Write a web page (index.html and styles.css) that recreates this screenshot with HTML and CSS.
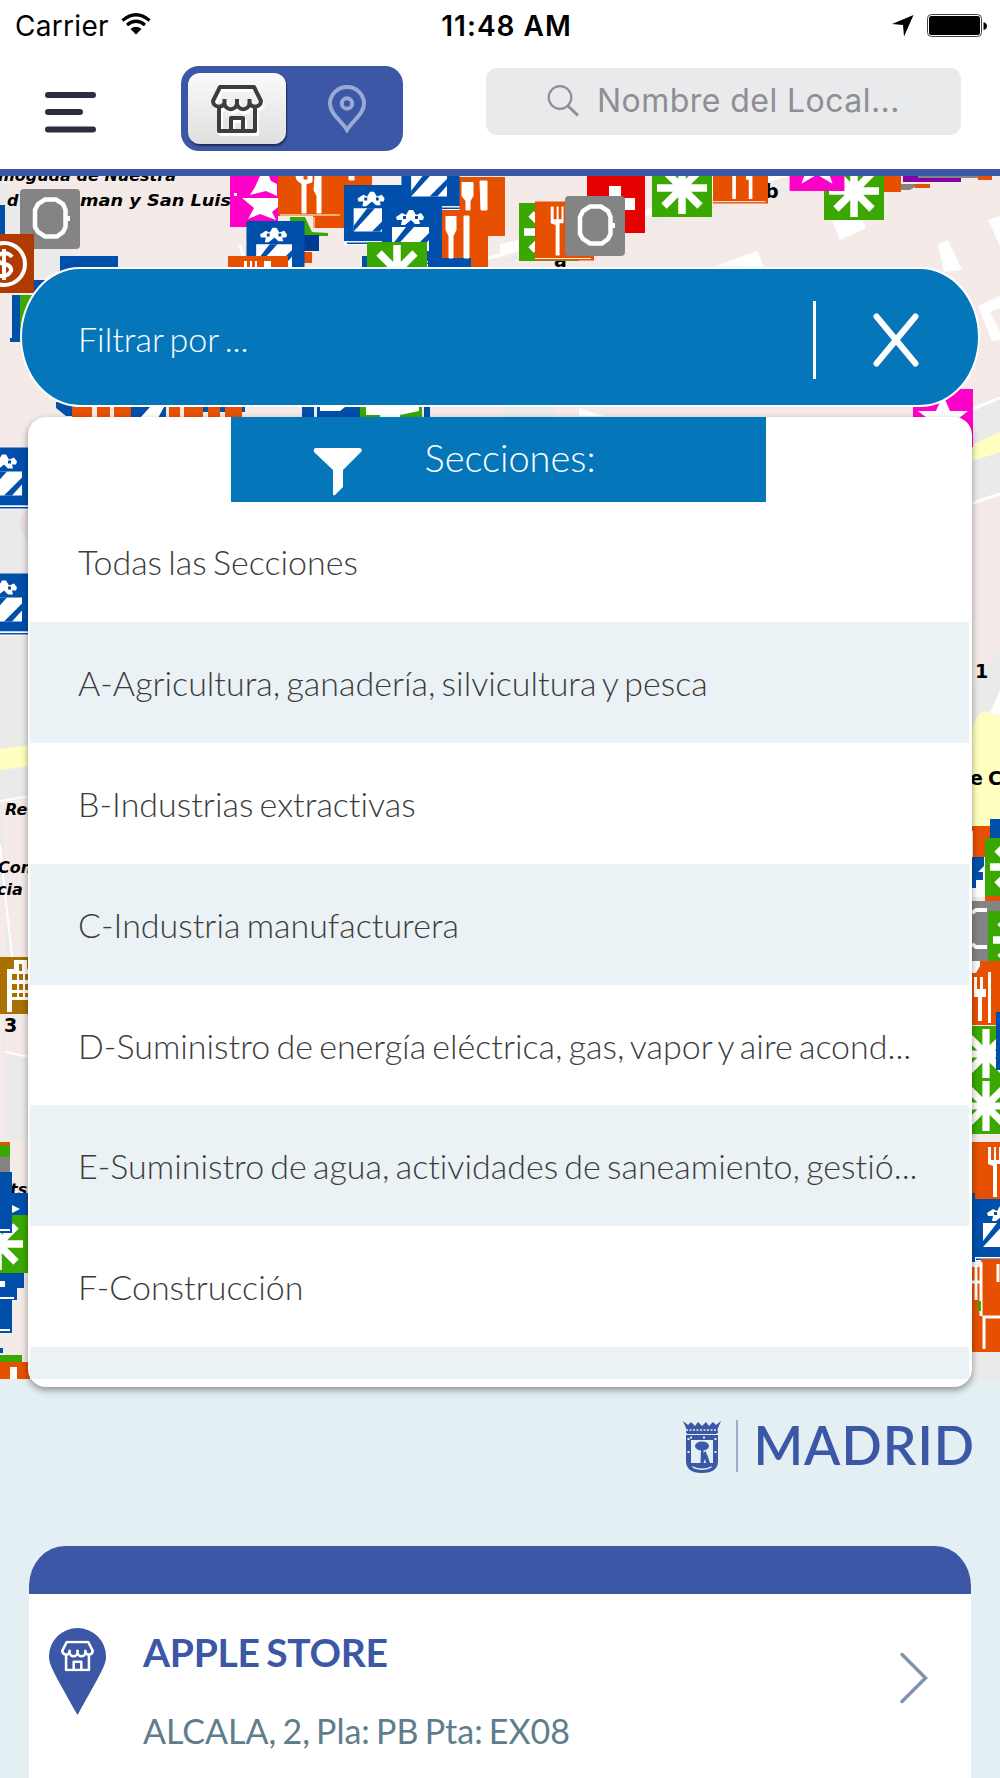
FILE: index.html
```html
<!DOCTYPE html>
<html lang="es">
<head>
    <meta charset="UTF-8">
    <meta name="viewport" content="width=device-width, initial-scale=1.0">
    <title>Locales de Madrid</title>
    <link rel="stylesheet" href="styles.css">
</head>
<body>
    <!-- Shared icons -->
    <svg class="defs" width="0" height="0">
        <symbol id="store" viewBox="0 0 52 48">
            <path d="M9 2H43L50 16A6 6 0 0 1 38.500 18A6 6 0 0 1 26 18A6 6 0 0 1 13.500 18A6 6 0 0 1 2 16ZM13.500 18V14M26 18V14M38.500 18V14M8 23V46H44V23M20 46V33H32V46" fill="none" stroke="currentColor" stroke-width="4" stroke-linejoin="round"/>
        </symbol>
        <symbol id="gift" viewBox="0 0 60 62">
            <path d="M0 0H60V58H0Z" fill="#004fab"/>
            <path d="M0 58H60V62H0Z" fill="#fff"/>
            <path d="M3 59.500H60V61H3Z" fill="#004fab"/>
            <path d="M10 24H47V48H10Z" fill="#fff"/>
            <path d="M10 42L24 24H32L10 48ZM29 48L47 30V37L37 48Z" fill="#004fab"/>
            <path d="M14 14L20 10L24 12L27 7H31L34 12L39 10L42 14L41 17H37L38 21H33L29 17L23 22H19L20 17H15Z" fill="#fff"/>
            <path d="M21 13H24V16H21ZM33 13H36V16H33Z" fill="#004fab"/>
        </symbol>
        <symbol id="star" viewBox="0 0 60 58">
            <path d="M0 0H60V58H0Z" fill="#ff00c8"/>
            <path d="M30 6L37 22H55L41 33L47 50L30 40L13 50L19 33L5 22H23Z" fill="#fff"/>
        </symbol>
        <symbol id="food" viewBox="0 0 60 60">
            <path d="M0 0H60V60H0Z" fill="#e65000"/>
            <path d="M16 5H19V18H22V5H24V18H27V5H29V22H25V55H21V24L16 22ZM36 5H43V55H39V34H36Z" fill="#fff"/>
            <path d="M0 58H57" stroke="#fff" stroke-width="1"/>
        </symbol>
        <symbol id="plant" viewBox="0 0 60 58">
            <path d="M0 0H60V58H0Z" fill="#3aa800"/>
            <path d="M30 3V55M5 29H55M12 11L48 47M48 11L12 47" stroke="#fff" stroke-width="7.500"/>
        </symbol>
        <symbol id="zero" viewBox="0 0 60 60">
            <rect width="60" height="60" rx="4" fill="#848484"/>
            <path d="M25 10.500H36L43 15L45.500 21V38L43 43L37 47.500H25L18 43L15 38V21L18 15Z" fill="none" stroke="#fff" stroke-width="4.500"/>
            <path d="M46 27H50V32H46Z" fill="#fff"/>
        </symbol>
    </svg>

    <div class="status-bar">
        <div class="carrier">
            <span>Carrier</span>
            <svg width="30" height="22" viewBox="0 0 30 22">
                <path d="M1.500 7.500Q15 -4 28.500 7.500M6 12Q15 4.500 24 12" fill="none" stroke="#000" stroke-width="3.200"/>
                <path d="M9.500 16Q15 11.500 20.500 16L15 21.500Z"/>
            </svg>
        </div>
        <span class="time">11:48 AM</span>
        <div class="battery">
            <svg width="96" height="24" viewBox="0 0 96 24">
                <path d="M0 10L21.500 1L12 22.500L11 11Z"/>
                <rect x="35.500" y=".5" width="54" height="22" rx="4" fill="#fff" stroke="#444"/>
                <rect x="37" y="2" width="51" height="19" rx="2.500"/>
                <path d="M91.500 8Q95 9 95 12T91.500 16Z"/>
            </svg>
        </div>
    </div>

    <header class="toolbar">
        <svg class="menu" width="51" height="42" viewBox="0 0 51 42">
            <path d="M3 4H48M3 21H35M3 38.500H48" stroke="#2a2e40" stroke-width="6" stroke-linecap="round"/>
        </svg>
        <div class="switch">
            <div class="switch-on"><svg width="52" height="48"><use href="#store"/></svg></div>
            <div class="switch-off">
                <svg width="38" height="48" viewBox="0 0 38 48">
                    <path d="M19 45C13 35 2 29 2 18.500A17 16.500 0 0 1 36 18.500C36 29 25 35 19 45Z" fill="none" stroke="#9caad3" stroke-width="4"/>
                    <circle cx="19" cy="18.500" r="5.200" fill="none" stroke="#9caad3" stroke-width="4"/>
                </svg>
            </div>
        </div>
        <div class="search">
            <svg width="33" height="33" viewBox="0 0 33 33">
                <path d="M20 20L31 30.500" stroke="#8e8e93" stroke-width="3"/>
                <circle cx="13" cy="12.500" r="11.300" fill="none" stroke="#8e8e93" stroke-width="2.200"/>
            </svg>
            <span>Nombre del Local...</span>
        </div>
    </header>

    <main class="map">
        <svg class="map-tiles" width="1000" height="1203" viewBox="0 176 1000 1203">
            <!-- Streets -->
            <path d="M0 176H1000V1379H0Z" fill="#f4eae8"/>
            <path d="M0 180L60 240L80 262L34 280L0 240ZM0 505H30V797L0 802ZM0 802L5 860L12 955H4V1140H28V1060L6 1052V900L0 880Z" fill="#eaeaea"/>
            <path d="M0 749L30 745V766L0 770Z" fill="#ffffc0"/>
            <path d="M0 801L30 796M0 845L12 957M5 1052L30 1057" fill="none" stroke="#fff" stroke-width="2"/>
            <path d="M500 256L640 218L790 176H700L640 214L500 244Z" fill="#fff"/>
            <path d="M500 262L640 224L840 176" stroke="#eaeaea" stroke-width="4" fill="none"/>
            <path d="M832 220L860 212L866 228L840 240ZM938 244L948 240L962 270L944 272ZM988 220L1000 216V246ZM716 266L757 251L764 267ZM978 306L1000 296V340L992 341ZM579 408L604 416H579Z" fill="#fff"/>
            <path d="M990 312L1000 308V332Z" fill="#f4eae8"/>
            <path d="M505 406H552L555 418H505ZM970 409L1000 397V495L970 505ZM970 690L1000 650V715L970 750Z" fill="#eaeaea"/>
            <path d="M970 410L1000 398M970 504L1000 494M240 245L246 265M480 260L505 254" stroke="#fff" stroke-width="3"/>
            <path d="M970 446L1000 432V452L970 462ZM972 728Q980 706 990 713L1000 717V830H972Z" fill="#ffffc0"/>
            <path d="M990 713L1000 690V716Z" fill="#fff"/>
            <path d="M28 510Q12 524 28 540Z" fill="#eadfdd"/>
            <path d="M970 1352H1000V1379H970Z" fill="#eaeaea"/>
            <!-- Street names -->
            <g class="street-names">
                <text x="-2" y="181" textLength="178" lengthAdjust="spacingAndGlyphs">moguda de Nuestra</text>
                <text x="7" y="206">d</text>
                <text x="80" y="206" textLength="151" lengthAdjust="spacingAndGlyphs">man y San Luis</text>
                <text x="5" y="815">Re</text>
                <text x="-2" y="873">Con</text>
                <text x="-3" y="895">cia</text>
                <text x="10" y="1195">ts</text>
            </g>
            <g class="street-numbers">
                <text x="4" y="1032">3</text>
                <text x="975" y="678">1</text>
                <text x="970" y="785">e</text>
                <text x="988" y="785">C</text>
                <text x="765" y="198">b</text>
                <text x="554" y="267">a</text>
            </g>
            <!-- Top pins -->
            <path d="M0 205H5V236H0ZM34 280H45V300H34ZM12 295H20V338H12ZM10 338H24V342H10Z" fill="#004fab"/>
            <path d="M20 295H40V346L20 342Z" fill="#3aa800"/>
            <use href="#zero" x="20" y="189" width="60" height="60"/>
            <path d="M0 234H34V293H0Z" fill="#b03a00"/>
            <circle cx="4" cy="264" r="21" fill="none" stroke="#fff" stroke-width="4"/>
            <path d="M12 257Q9 253 4 253Q-3 254 -3 259Q0 264 5 264Q12 266 11 271Q8 276 3 276H-3M4 249V280" fill="none" stroke="#fff" stroke-width="4"/>
            <path d="M60 256H118V275H60Z" fill="#004fab"/>
            <path d="M230 176H278V227H230Z" fill="#ff00c8"/>
            <path d="M260 176H269L271 181L277 184V196L266 191L250 195L255 187ZM242 198H278V207L272 212L276 220L260 214L248 219L254 208ZM234 193H237V196H234Z" fill="#fff"/>
            <path d="M278 176H372V228H313V216H278Z" fill="#e65000"/>
            <path d="M296 176H303V180H308V176H312V182L306 184V213H302V184L297 180ZM315 176H321V213H317V196L314 190ZM280 215H340M314 228V217M349 180V176H354V180Z" fill="#fff" stroke="#fff"/>
            <path d="M290 217L305 217L312 232L328 233V236H290Z" fill="#3aa800"/>
            <path d="M304 235H319V251H304Z" fill="#003a95"/>
            <path d="M304 252H312V263H304Z" fill="#e65000"/>
            <use href="#gift" x="246" y="221" width="59" height="60"/>
            <use href="#food" x="228" y="256" width="60" height="60"/>
            <path d="M459 177H505V236H488V270H440V210H459Z" fill="#e65000"/>
            <path d="M372 176H402V186H372Z" fill="#f7f0ee"/>
            <use href="#gift" x="401" y="150" width="59" height="60"/>
            <use href="#gift" x="343" y="185" width="60" height="60"/>
            <use href="#gift" x="382" y="203" width="60" height="62"/>
            <path d="M428 258H471V270H428ZM362 256H368V268H362Z" fill="#004fab"/>
            <path d="M462 182V196L466 201V210H470V201L473 196V182M480 181H487V210H481ZM446 216V230L449 236V258H453V236L456 230V216M464 216H469V258H464Z" fill="#fff" stroke="#fff"/>
            <use href="#plant" x="367" y="242" width="60" height="58"/>
            <use href="#plant" x="519" y="203" width="60" height="58"/>
            <use href="#food" x="535" y="201" width="59" height="60"/>
            <path d="M587 176H645V233H587Z" fill="#e60000"/>
            <path d="M609 186H621V198H635V210H621V222H609V210H597V198H609Z" fill="#fff"/>
            <use href="#zero" x="565" y="196" width="60" height="60"/>
            <use href="#food" x="713" y="146" width="55" height="60"/>
            <use href="#plant" x="652" y="159" width="60" height="58"/>
            <path d="M884 176H901V192H884ZM978 176H992V180H978ZM915 184H930V188H915Z" fill="#e65000"/>
            <use href="#plant" x="824" y="162" width="60" height="58"/>
            <use href="#star" x="787" y="138" width="60" height="53"/>
            <path d="M903 176H961V182H903Z" fill="#8800a8"/>
            <path d="M901 184H915V187L910 190H901ZM918 175H978V178H918Z" fill="#848484"/>
            <!-- Pins between the filter and the list -->
            <path d="M56 402H75V416H66L56 408ZM131 405H166V420H131ZM190 405H245V412H190ZM302 407H314V420H302ZM317 407H362V420H317ZM424 407H430V418H424Z" fill="#004fab"/>
            <path d="M72 407H92V420H72ZM97 407H110V420H97ZM114 407H131V420H114ZM169 407H180V420H169ZM184 407H203V420H184ZM208 407H220V420H208ZM225 407H242V420H225Z" fill="#e65000"/>
            <path d="M360 407H422V420H360Z" fill="#3aa800"/>
            <path d="M140 418L150 407H164L158 418ZM320 407H345L340 411H320ZM366 407H419V411L400 415V420H380V415H366Z" fill="#fff"/>
            <use href="#star" x="913" y="389" width="60" height="58"/>
            <!-- Left edge -->
            <use href="#gift" x="-25" y="447" width="60" height="63"/>
            <use href="#gift" x="-25" y="573" width="60" height="63"/>
            <path d="M0 957H30V1014H0Z" fill="#a87000"/>
            <path d="M7 1012V969H14V960H27V969H30V1000H12V1012Z" fill="#fff"/>
            <path d="M12 974H17V980H12ZM19 974H23V980H19ZM25 974H30V980H25ZM12 984H17V990H12ZM19 984H23V990H19ZM25 984H30V990H25ZM12 993H17V997H12ZM19 993H23V997H19ZM25 993H30V997H25ZM19 964H22V971H19Z" fill="#a87000"/>
            <path d="M0 1142H10V1146H0Z" fill="#e65000"/>
            <path d="M0 1145H10V1158H0ZM0 1355H22V1362H0Z" fill="#3aa800"/>
            <path d="M0 1157H10V1173H0Z" fill="#848484"/>
            <path d="M12 1193H30V1216H12ZM0 1273H24V1288H17V1300H12V1333H0ZM0 1348H3V1353H0Z" fill="#004fab"/>
            <path d="M12 1205L20 1209L12 1213ZM0 1281H5V1287H0Z" fill="#fff"/>
            <use href="#plant" x="-32" y="1215" width="60" height="58"/>
            <path d="M0 1172H12V1233H0Z" fill="#004fab"/>
            <path d="M0 1230H10M0 1298H14M0 1330H10" stroke="#fff" stroke-width="2"/>
            <path d="M0 1362H32V1379H0Z" fill="#e65000"/>
            <path d="M10 1367H17V1379H10Z" fill="#fff"/>
            <!-- Right edge -->
            <use href="#food" x="930" y="826" width="60" height="60"/>
            <path d="M990 819H1000V840H990Z" fill="#004fab"/>
            <path d="M972 857H985V897H972Z" fill="#fff"/>
            <path d="M972 857H984V866L978 872H983V880H976V888H972Z" fill="#004fab"/>
            <use href="#plant" x="985" y="838" width="60" height="58"/>
            <path d="M985 896H1000V901H985Z" fill="#e65000"/>
            <path d="M970 901H1000V961H970Z" fill="#848484"/>
            <path d="M972 913L976 910H987M972 944L976 947H987" fill="none" stroke="#fff" stroke-width="4"/>
            <use href="#plant" x="988" y="911" width="60" height="58"/>
            <path d="M970 961H1000V1025H970Z" fill="#e65000"/>
            <path d="M974 977H977V989H980V977H983V989H986V997H982V1021H978V997H974ZM988 972H991V1023H988Z" fill="#fff"/>
            <path d="M972 961H980V966L976 973H972Z" fill="#fff"/>
            <use href="#plant" x="956" y="1026" width="60" height="56"/>
            <use href="#plant" x="956" y="1078" width="60" height="56"/>
            <path d="M996 1012H1000V1070H996Z" fill="#004fab"/>
            <use href="#food" x="972" y="1142" width="60" height="60"/>
            <use href="#gift" x="973" y="1193" width="60" height="74"/>
            <path d="M970 1193H975V1262H970Z" fill="#004fab"/>
            <path d="M972 1267H981V1259H1000V1352H972Z" fill="#e65000"/>
            <path d="M972 1282H980M976 1262V1300M981 1262V1316M1000 1317H984V1349M998 1264V1282" fill="none" stroke="#fff" stroke-width="3"/>
            <path d="M978 1301H981V1311H978Z" fill="#3aa800"/>
        </svg>

        <div class="filter">
            <span>Filtrar por ...</span>
            <svg class="close" width="46" height="54" viewBox="0 0 46 54">
                <path d="M3.500 3.500L42.500 50.500M42.500 3.500L3.500 50.500" stroke="#fff" stroke-width="6" stroke-linecap="round"/>
            </svg>
        </div>

        <div class="sections">
            <div class="sections-title">
                <svg width="50" height="48" viewBox="0 0 50 48">
                    <path d="M3 0H47Q50 1 48 4L30 22V39L22 47Q20 48 20 46V22L1 4Q0 0 3 0Z" fill="#fff"/>
                </svg>
                <span>Secciones:</span>
            </div>
            <ul class="sections-list">
                <li>Todas las Secciones</li>
                <li>A-Agricultura, ganadería, silvicultura y pesca</li>
                <li>B-Industrias extractivas</li>
                <li>C-Industria manufacturera</li>
                <li>D-Suministro de energía eléctrica, gas, vapor y aire acond...</li>
                <li>E-Suministro de agua, actividades de saneamiento, gestió...</li>
                <li>F-Construcción</li>
                <li></li>
            </ul>
        </div>
    </main>

    <div class="brand">
        <svg width="38" height="54" viewBox="0 0 38 54">
            <path d="M0 1L5 5L8 2L12 6L15 2L19 6L23 2L26 6L30 2L33 5L38 1L35 8V13H3V8Z" fill="#3b57a5"/>
            <path d="M3 10H35" stroke="#e4eff4" stroke-width="1.500" stroke-dasharray="2 1.500"/>
            <path d="M3 15H35V41Q35 53 19 53T3 41Z" fill="#3b57a5"/>
            <path d="M8 20H30V43H8Z" fill="#e4eff4"/>
            <path d="M9 46Q19 51 29 46L28 48Q19 52 10 48Z" fill="#e4eff4"/>
            <ellipse cx="19" cy="26" rx="7" ry="4.500" fill="#3b57a5"/>
            <path d="M18 29H20.500V33L22.500 31L25 37L27 43H23L22 39L20.500 43H17.500Z" fill="#3b57a5"/>
            <path d="M4 13.500H34M8 43.500H30" stroke="#3b57a5"/>
            <path d="M5.500 18V44M32.500 18V44M7 17.500H31" stroke="#e4eff4" stroke-width="2" stroke-dasharray="2 11"/>
        </svg>
        <span class="brand-name">MADRID</span>
    </div>

    <div class="card">
        <div class="card-top"></div>
        <div class="card-body">
            <div class="card-pin">
                <svg width="57" height="87" viewBox="0 0 57 87">
                    <path d="M28.500 0A28.500 28.500 0 0 1 57 28.500C57 37 53 43 28.500 87C4 43 0 37 0 28.500A28.500 28.500 0 0 1 28.500 0Z" fill="#3b57a5"/>
                    <use href="#store" x="12" y="12.500" width="33" height="31"/>
                </svg>
            </div>
            <div class="card-text">
                <h2>APPLE STORE</h2>
                <p>ALCALA, 2, Pla: PB Pta: EX08</p>
            </div>
            <svg class="chevron" width="30" height="52" viewBox="0 0 30 52">
                <path d="M3 2.500L26.500 26L3 49.500" fill="none" stroke="#8093ad" stroke-width="3.500" stroke-linecap="round"/>
            </svg>
        </div>
    </div>
</body>
</html>
```
FILE: styles.css
```css
* {
    box-sizing: border-box;
}

body {
    margin: 0;
    width: 1000px;
    height: 1778px;
    overflow: hidden;
    background-color: #e4eff4;
    font-family: Lato, sans-serif;
    font-variant-ligatures: none;
}

svg {
    display: block;
    flex: none;
}

.defs {
    position: absolute;
}

/* Status bar */
.status-bar {
    display: grid;
    grid-template-columns: 1fr auto 1fr;
    align-items: center;
    height: 50px;
    padding: 1px 12px 0 15px;
    background-color: white;
    font-family: Inter, sans-serif;
    font-size: 28px;
}

.carrier {
    display: flex;
    align-items: center;
    gap: 12px;
    letter-spacing: 0.3px;
}

.carrier svg {
    margin-top: -3px;
}

.time {
    padding-left: 10px;
    font-size: 28px;
    font-weight: 600;
    letter-spacing: 1px;
}

.battery {
    display: flex;
    justify-content: flex-end;
}

/* Toolbar */
.toolbar {
    display: flex;
    height: 126px;
    padding: 16px 39px 0 45px;
    background-color: white;
    border-bottom: 7px solid #3b57a5;
}

.menu {
    margin: 25px 85px 0 0;
}

.switch {
    display: flex;
    width: 222px;
    height: 85px;
    padding: 7px 6px 7px 7px;
    background-color: #3b57a5;
    border-radius: 18px;
}

.switch-on,
.switch-off {
    display: flex;
    align-items: center;
    justify-content: center;
}

.switch-on {
    width: 98px;
    height: 71px;
    border-radius: 12px;
    color: #3d3d3d;
    background: linear-gradient(#fafafa, #dfdfdf);
    box-shadow: 1px 2px 2px rgba(0, 0, 0, 0.5);
}

.switch-on svg {
    filter: drop-shadow(2px 3px 0 white);
}

.switch-off {
    flex: 1;
    padding-left: 11px;
}

.search {
    display: flex;
    align-items: center;
    gap: 17px;
    width: 475px;
    height: 67px;
    margin: 2px 0 0 83px;
    padding-left: 61px;
    border-radius: 11px;
    background-color: #e9eaec;
    color: #8e8e93;
    font-family: Inter, sans-serif;
    font-size: 32px;
    letter-spacing: 0.450px;
}

.search span {
    margin-top: -2px;
}

/* Map */
.map {
    position: relative;
    height: 1203px;
    padding: 91px 20px 0;
}

.map-tiles {
    position: absolute;
    top: 0;
    left: 0;
}

.street-names {
    font: italic bold 16px "DejaVu Sans", sans-serif;
}

.street-numbers {
    font: bold 19px "DejaVu Sans", sans-serif;
}

.filter {
    position: relative;
    display: flex;
    align-items: center;
    height: 140px;
    padding: 3px 59px 0 56px;
    border: 2px solid white;
    border-radius: 60px / 70px;
    background-color: #0676ba;
    color: white;
    font-size: 34px;
    font-weight: 300;
    word-spacing: -3px;
}

.filter span {
    flex: 1;
}

.close {
    box-sizing: content-box;
    margin-top: 3px;
    padding: 12px 0 12px 57px;
    border-left: 3px solid white;
}

.sections {
    position: relative;
    height: 970px;
    margin: 10px 8px 0;
    padding: 0 3px 8px 2px;
    border-radius: 18px;
    background-color: white;
    box-shadow: 0 3px 7px rgba(0, 0, 0, 0.4);
}

.sections-title {
    display: flex;
    width: 535px;
    height: 84.500px;
    margin-left: 200.500px;
    padding-left: 82px;
    background-color: #0676ba;
    color: white;
    font-size: 38px;
    font-weight: 300;
}

.sections-title svg {
    margin-top: 31px;
}

.sections-title span {
    margin: 17px 0 0 62px;
}

.sections-list {
    height: 877.500px;
    margin: 0;
    padding: 0;
    overflow: hidden;
    list-style: none;
}

.sections-list li {
    display: flex;
    align-items: center;
    height: 120.800px;
    padding: 0 0 0 48px;
    color: #3c3c3c;
    font-size: 34px;
    font-weight: 300;
    white-space: nowrap;
    word-spacing: -3px;
}

.sections-list li:nth-child(even) {
    background-color: #eaf2f6;
}

/* Logo */
.brand {
    display: flex;
    height: 167px;
    padding: 41px 25px 0 0;
    justify-content: flex-end;
}

.brand-name {
    height: 52px;
    margin-left: 15px;
    padding-left: 15px;
    border-left: 2px solid #9dacd2;
    color: #3b57a5;
    font-size: 53px;
    font-weight: 600;
    line-height: 50px;
    letter-spacing: 1px;
}

/* Result card */
.card {
    width: 942px;
    margin-left: 29px;
}

.card-top {
    height: 48px;
    border-radius: 36px 36px 0 0 / 40px 40px 0 0;
    background-color: #3b57a5;
}

.card-body {
    display: flex;
    height: 184px;
    padding: 34px 42px 0 20px;
    background-color: white;
}

.card-pin {
    color: white;
}

.card-text {
    flex: 1;
    padding-left: 37px;
    word-spacing: -2.500px;
}

.card-text h2 {
    margin: 0;
    color: #3b57a5;
    font-size: 39px;
    font-weight: 700;
    line-height: 48px;
    letter-spacing: -0.300px;
}

.card-text p {
    margin: 33px 0 0;
    color: #607d8b;
    font-size: 34px;
    line-height: 44px;
}

.chevron {
    margin-top: 24px;
}
```
